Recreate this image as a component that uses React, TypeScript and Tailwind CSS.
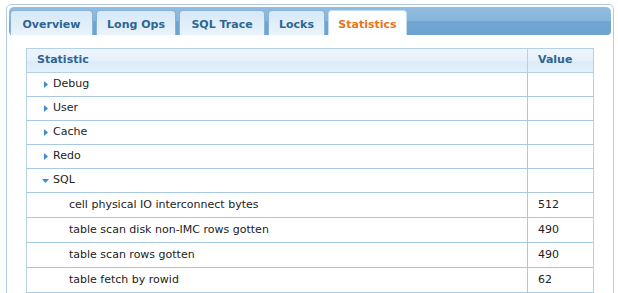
import React from 'react';

const tabs = [
  { name: 'Overview', w: 'w-[83px]' },
  { name: 'Long Ops', w: 'w-[80px]' },
  { name: 'SQL Trace', w: 'w-[86px]' },
  { name: 'Locks', w: 'w-[57px]' },
  { name: 'Statistics', w: 'w-[79px]', active: true },
];

const groups = ['Debug', 'User', 'Cache', 'Redo'];

const sqlStats = [
  { name: 'cell physical IO interconnect bytes', value: '512' },
  { name: 'table scan disk non-IMC rows gotten', value: '490' },
  { name: 'table scan rows gotten', value: '490' },
  { name: 'table fetch by rowid', value: '62' },
];

const ArrowRight = () => (
  <svg width="4" height="7" viewBox="0 0 4 7" className="shrink-0">
    <path d="M0 0 L4 3.5 L0 7 Z" fill="#3b8ad6" />
  </svg>
);

const ArrowDown = () => (
  <svg width="7" height="4" viewBox="0 0 7 4" className="shrink-0">
    <path d="M0 0 L7 0 L3.5 4 Z" fill="#3b8ad6" />
  </svg>
);

export default function App() {
  return (
    <div
      className="h-[293px] overflow-hidden bg-white pl-[6px] pr-[4px] pt-[4px]"
      style={{ fontFamily: '"DejaVu Sans", Verdana, sans-serif' }}
    >
      <div className="h-[320px] rounded-t-[5px] border border-[#b0cce3] bg-white px-[2px] pt-[2px]">
        {/* tab bar */}
        <div className="flex h-[28px] items-end gap-[3px] rounded-[5px] rounded-b-[4px] bg-[linear-gradient(to_bottom,#92bde0_0%,#86b4da_50%,#71a5d1_52%,#6ea2cf_100%)] pl-[1px]">
          {tabs.map((t) => (
            <div
              key={t.name}
              className={`flex h-[25px] ${t.w} items-center justify-center rounded-t-[4px] border border-b-0 pt-[4px] text-[11px] font-bold ${
                t.active
                  ? 'border-[#c5dcef] bg-[#fdfeff] text-[#e5761b]'
                  : 'border-[#86b3d8] bg-[linear-gradient(to_bottom,#d6e8f7,#eaf3fb)] text-[#2d6593]'
              }`}
            >
              {t.name}
            </div>
          ))}
        </div>

        {/* table */}
        <div className="ml-[17px] mr-[17px] mt-[13px] border border-[#b4d1e8] text-[11px] text-[#222]">
          <div className="flex h-[24px] border-b border-[#b4d1e8] bg-[linear-gradient(to_bottom,#edf5fd_0%,#e6f1fc_50%,#dcebf9_55%,#e4f0fb_100%)] font-bold text-[#2d6593]">
            <div className="flex flex-1 items-center pl-[10px]">Statistic</div>
            <div className="flex w-[66px] items-center border-l border-[#b4d1e8] pl-[10px]">Value</div>
          </div>
          {groups.map((g) => (
            <div key={g} className="flex h-[24px] border-b border-[#a9c8e1]">
              <div className="flex flex-1 items-center gap-[5px] pl-[17px]">
                <ArrowRight />
                <span>{g}</span>
              </div>
              <div className="w-[66px] border-l border-[#a9c8e1]" />
            </div>
          ))}
          <div className="flex h-[24px] border-b border-[#a9c8e1]">
            <div className="flex flex-1 items-center gap-[4px] pl-[15px]">
              <ArrowDown />
              <span>SQL</span>
            </div>
            <div className="w-[66px] border-l border-[#a9c8e1]" />
          </div>
          {sqlStats.map((s) => (
            <div key={s.name} className="flex h-[25px] border-b border-[#a9c8e1]">
              <div className="flex flex-1 items-center pl-[42px]">{s.name}</div>
              <div className="flex w-[66px] items-center border-l border-[#a9c8e1] pl-[10px]">{s.value}</div>
            </div>
          ))}
          <div className="flex h-[25px]">
            <div className="flex-1" />
            <div className="w-[66px] border-l border-[#a9c8e1]" />
          </div>
        </div>
      </div>
    </div>
  );
}
